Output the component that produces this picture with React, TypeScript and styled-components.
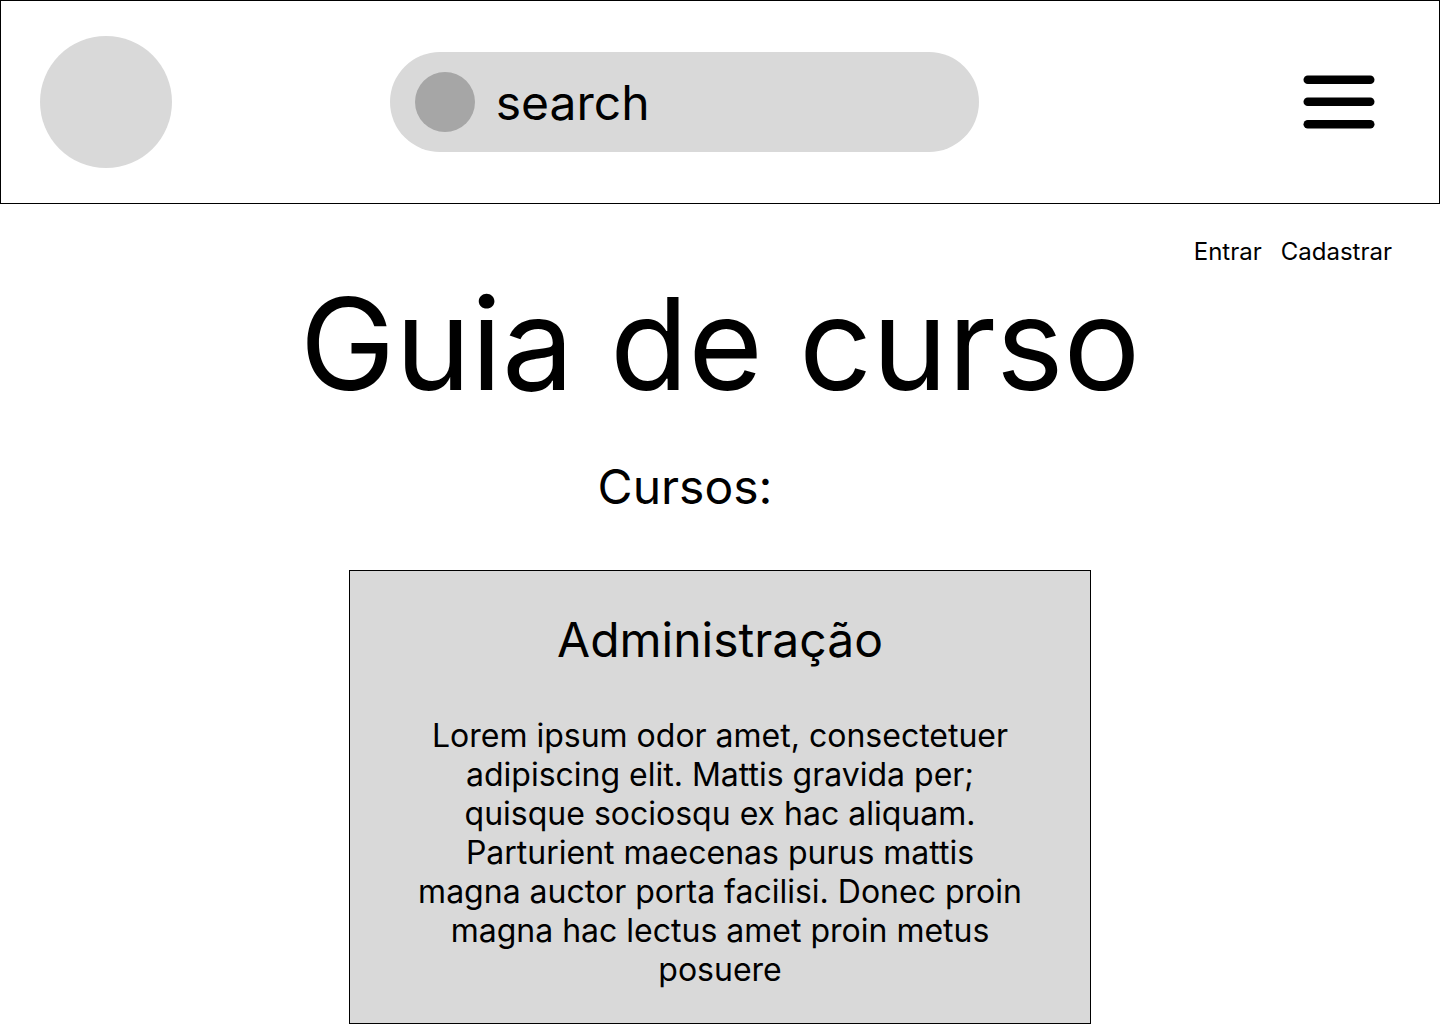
import React from "react";
import styled, { createGlobalStyle } from "styled-components";

const GlobalStyle = createGlobalStyle`
  *, *::before, *::after { box-sizing: border-box; }
  body {
    margin: 0;
    background: #fff;
    color: #000;
    font-family: Inter, "Liberation Sans", sans-serif;
  }
  h1, h2, h3, p { margin: 0; font-weight: 400; }
`;

const Header = styled.header`
  display: grid;
  grid-template-columns: 15fr minmax(0, 589px) 17fr;
  align-items: center;
  min-height: 204px;
  padding: 0 64px 0 39px;
  border: 1px solid #000;
`;

const Logo = styled.a`
  width: 132px;
  height: 132px;
  border-radius: 50%;
  background: #d9d9d9;
`;

const SearchBar = styled.label`
  display: flex;
  align-items: center;
  gap: 21px;
  height: 100px;
  padding: 0 25px;
  border-radius: 50px;
  background: #d9d9d9;
`;

const SearchDot = styled.span`
  flex: none;
  width: 60px;
  height: 60px;
  border-radius: 50%;
  background: #a6a6a6;
`;

const SearchInput = styled.input`
  flex: 1;
  min-width: 0;
  height: 60px;
  padding: 0;
  border: 0;
  outline: 0;
  background: transparent;
  font: inherit;
  font-size: 48px;
  line-height: 58px;
  &::placeholder { color: #000; opacity: 1; }
`;

const MenuButton = styled.button`
  justify-self: end;
  display: flex;
  padding: 0;
  border: 0;
  background: transparent;
  cursor: pointer;
`;

const Account = styled.nav`
  display: flex;
  justify-content: flex-end;
  gap: 19px;
  padding: 33px 48px 0;
`;

const AccountLink = styled.a`
  color: inherit;
  font-size: 24px;
  line-height: 29px;
  text-decoration: none;
`;

const Main = styled.main`
  display: flex;
  flex-direction: column;
  align-items: center;
`;

const Title = styled.h1`
  font-size: 128px;
  line-height: 155px;
`;

const SectionTitle = styled.h2`
  padding: 37px 70px 54px 0;
  font-size: 48px;
  line-height: 58px;
`;

const Card = styled.article`
  width: 100%;
  max-width: 742px;
  padding: 40px 64px 34px;
  border: 1px solid #000;
  background: #d9d9d9;
  text-align: center;
`;

const CardTitle = styled.h3`
  margin-bottom: 47px;
  font-size: 48px;
  line-height: 58px;
`;

const CardText = styled.p`
  font-size: 32px;
  line-height: 39px;
`;

export default function App() {
  return (
    <>
      <GlobalStyle />
      <Header>
        <Logo href="#" aria-label="Home" />
        <SearchBar>
          <SearchDot />
          <SearchInput type="text" placeholder="search" aria-label="search" />
        </SearchBar>
        <MenuButton type="button" aria-label="Menu">
          <svg width="72" height="54" viewBox="0 0 72 54" fill="#000" aria-hidden="true">
            <rect x="0.5" y="0.5" width="71" height="8.5" rx="4.25" />
            <rect x="0.5" y="22.5" width="71" height="8.5" rx="4.25" />
            <rect x="0.5" y="45" width="71" height="8.5" rx="4.25" />
          </svg>
        </MenuButton>
      </Header>
      <Account>
        <AccountLink href="#">Entrar</AccountLink>
        <AccountLink href="#">Cadastrar</AccountLink>
      </Account>
      <Main>
        <Title>Guia de curso</Title>
        <SectionTitle>Cursos:</SectionTitle>
        <Card>
          <CardTitle>Administração</CardTitle>
          <CardText>
            Lorem ipsum odor amet, consectetuer adipiscing elit. Mattis gravida
            per; quisque sociosqu ex hac aliquam. Parturient maecenas purus
            mattis magna auctor porta facilisi. Donec proin magna hac lectus
            amet proin metus posuere
          </CardText>
        </Card>
      </Main>
    </>
  );
}
